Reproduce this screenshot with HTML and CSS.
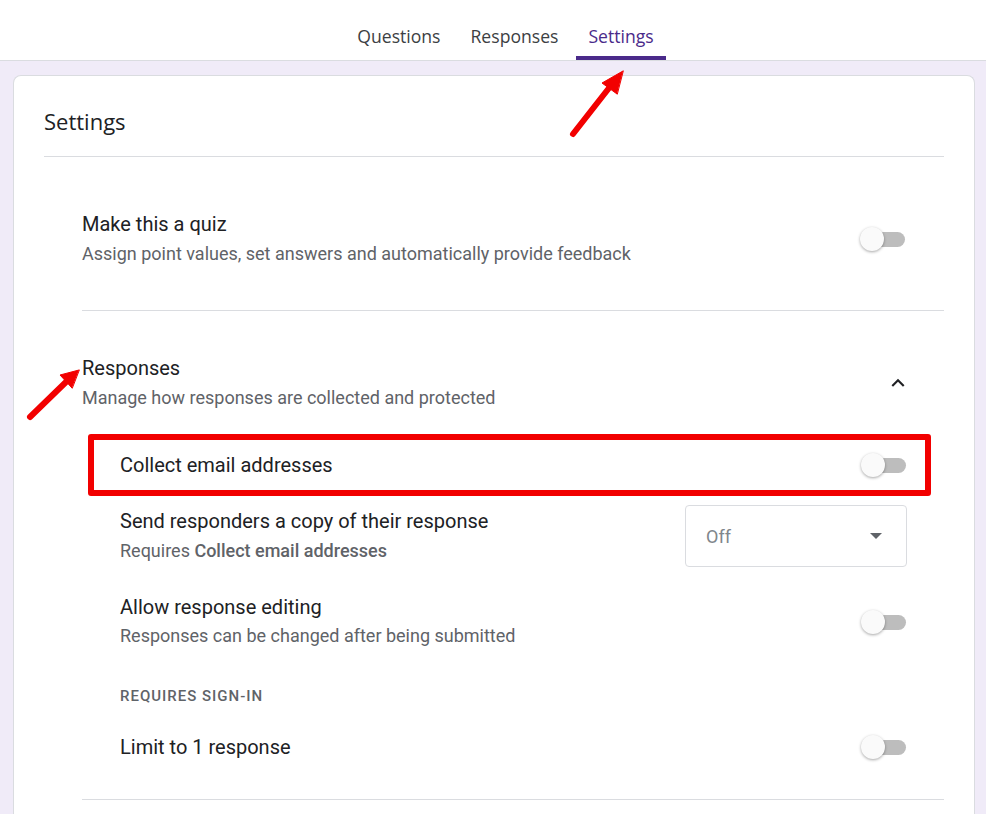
FILE: index.html
```html
<!DOCTYPE html>
<html lang="en">

<head>
    <meta charset="UTF-8">
    <meta name="viewport" content="width=device-width, initial-scale=1.0">
    <title>Form settings</title>
    <link rel="stylesheet" href="styles.css">
</head>

<body>
    <!-- Top tabs -->
    <header class="topbar">
        <nav class="tabs">
            <a class="tab">Questions</a>
            <a class="tab">Responses</a>
            <a class="tab active">Settings</a>
        </nav>
    </header>

    <div class="card">
        <h1 class="card-title">Settings</h1>

        <section class="section">
            <div class="option">
                <div class="option-text">
                    <div class="option-title">Make this a quiz</div>
                    <div class="option-sub">Assign point values, set answers and automatically provide feedback</div>
                </div>
                <div class="toggle"></div>
            </div>
        </section>

        <section class="section responses">
            <div class="option">
                <div class="option-text">
                    <div class="option-title">Responses</div>
                    <div class="option-sub">Manage how responses are collected and protected</div>
                </div>
                <svg class="chevron" width="26" height="26" viewBox="0 0 24 24">
                    <path d="M7.41 15.41L12 10.83l4.59 4.58L18 14l-6-6-6 6z" fill="#202124"/>
                </svg>
            </div>

            <div class="sub-options">
                <div class="option single highlighted">
                    <div class="option-title">Collect email addresses</div>
                    <div class="toggle"></div>
                </div>

                <div class="option copy">
                    <div class="option-text">
                        <div class="option-title">Send responders a copy of their response</div>
                        <div class="option-sub">Requires <b>Collect email addresses</b></div>
                    </div>
                    <div class="select">
                        <span>Off</span>
                        <span class="caret"></span>
                    </div>
                </div>

                <div class="option editing">
                    <div class="option-text">
                        <div class="option-title">Allow response editing</div>
                        <div class="option-sub">Responses can be changed after being submitted</div>
                    </div>
                    <div class="toggle"></div>
                </div>

                <div class="group-label">REQUIRES SIGN-IN</div>

                <div class="option single">
                    <div class="option-title">Limit to 1 response</div>
                    <div class="toggle"></div>
                </div>
            </div>
        </section>
    </div>

    <!-- red arrows drawn over the screenshot -->
    <svg class="marks" width="986" height="814" viewBox="0 0 986 814">
        <g stroke="#f20000" stroke-width="6" stroke-linecap="round" fill="#f20000">
            <line x1="573" y1="134" x2="609" y2="88"/>
            <polygon points="623,71 602,83 617,94" stroke-width="1" stroke-linejoin="round"/>
            <line x1="30" y1="417" x2="66" y2="382"/>
            <polygon points="79,370 60,375 72,388" stroke-width="1" stroke-linejoin="round"/>
        </g>
    </svg>
</body>

</html>
```

FILE: styles.css
```css
body {
    margin: 0;
    background-color: #f0ebf8;
    font-family: Roboto, "Liberation Sans", sans-serif;
    color: #202124;
    position: relative;
    height: 814px;
    overflow: hidden;
}

.topbar {
    background-color: #fff;
    height: 60px;
    border-bottom: 1px solid #dadce0;
}

.tabs {
    display: flex;
    justify-content: center;
    gap: 6px;
    padding-left: 25px;
}

.tab {
    box-sizing: border-box;
    height: 60px;
    padding: 25px 12px 0;
    border-bottom: 4px solid transparent;
    font-family: "Open Sans", sans-serif;
    font-size: 17.6px;
    line-height: 22px;
    color: #3c4043;
    cursor: pointer;
}

.tab.active {
    color: #4a2a8a;
    border-bottom-color: #4a2a8a;
}

.card {
    box-sizing: border-box;
    height: 739px;
    margin: 14px 11px 0 13px;
    background-color: #fff;
    border: 1px solid #dadce0;
    border-bottom: none;
    border-radius: 8px 8px 0 0;
    padding: 0 30px;
}

.card-title {
    margin: 0;
    padding: 31px 0 21px;
    font-family: "Open Sans", sans-serif;
    font-weight: normal;
    font-size: 22px;
    line-height: 28px;
    border-bottom: 1px solid #dadce0;
}

.section {
    margin-left: 38px;
    padding: 55px 38px 44px 0;
    border-bottom: 1px solid #dadce0;
}

.section.responses {
    padding: 45px 0 28px 0;
}

.responses > .option {
    padding-right: 38px;
}

.option {
    display: flex;
    align-items: center;
    justify-content: space-between;
}

.option-title {
    font-size: 20px;
    line-height: 24px;
}

.option-sub {
    margin-top: 6px;
    font-size: 18px;
    line-height: 24px;
    color: #5f6368;
}

.option-sub b {
    font-weight: 500;
    color: #5f6368;
}

.chevron {
    margin-right: -5px;
}

.sub-options {
    margin-top: 31px;
    padding: 0 37px 0 38px;
}

.option.single {
    height: 48px;
}

.option.copy {
    margin-top: 16px;
}

.option.editing {
    margin-top: 28px;
}

.option.editing .option-sub {
    margin-top: 5px;
}

.group-label {
    margin: 38px 0 17px;
    font-size: 15px;
    line-height: 20px;
    font-weight: 500;
    letter-spacing: 1px;
    color: #5f6368;
}

.highlighted {
    position: relative;
}

.highlighted::after {
    content: "";
    position: absolute;
    top: -7px;
    bottom: -7px;
    left: -32px;
    right: -24px;
    border: 6px solid #f20000;
    border-radius: 3px;
}

.toggle {
    position: relative;
    width: 45px;
    height: 24px;
    margin-right: 1px;
}

.toggle::before {
    content: "";
    position: absolute;
    left: 9px;
    top: 5px;
    width: 36px;
    height: 15px;
    border-radius: 8px;
    background-color: #bdbdbd;
}

.toggle::after {
    content: "";
    position: absolute;
    left: 0;
    top: 0;
    width: 24px;
    height: 24px;
    border-radius: 50%;
    background-color: #fafafa;
    box-shadow: 0 1px 3px rgba(0, 0, 0, 0.35);
}

.select {
    box-sizing: border-box;
    width: 222px;
    height: 62px;
    border: 1px solid #dadce0;
    border-radius: 4px;
    padding: 0 24px 0 20px;
    display: flex;
    align-items: center;
    justify-content: space-between;
    font-size: 18px;
    color: #80868b;
}

.caret {
    width: 0;
    height: 0;
    border-left: 6px solid transparent;
    border-right: 6px solid transparent;
    border-top: 6px solid #5f6368;
}

.marks {
    position: absolute;
    top: 0;
    left: 0;
    pointer-events: none;
}
```
